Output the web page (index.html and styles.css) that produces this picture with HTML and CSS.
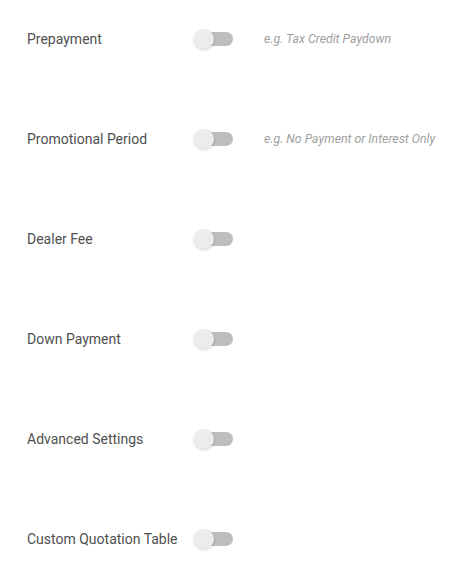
FILE: index.html
```html
<!DOCTYPE html>
<html>
<head>
<meta charset="utf-8">
<link rel="stylesheet" href="styles.css">
</head>
<body>
<div class="list">
  <div class="row"><span class="label">Prepayment</span><span class="switch"><span class="track"></span><span class="thumb"></span></span><span class="hint">e.g. Tax Credit Paydown</span></div>
  <div class="row"><span class="label">Promotional Period</span><span class="switch"><span class="track"></span><span class="thumb"></span></span><span class="hint">e.g. No Payment or Interest Only</span></div>
  <div class="row"><span class="label">Dealer Fee</span><span class="switch"><span class="track"></span><span class="thumb"></span></span></div>
  <div class="row"><span class="label">Down Payment</span><span class="switch"><span class="track"></span><span class="thumb"></span></span></div>
  <div class="row"><span class="label">Advanced Settings</span><span class="switch"><span class="track"></span><span class="thumb"></span></span></div>
  <div class="row"><span class="label">Custom Quotation Table</span><span class="switch"><span class="track"></span><span class="thumb"></span></span></div>
</div>
</body>
</html>
```
FILE: styles.css
```css
html, body {
  margin: 0;
  padding: 0;
  background: #fff;
  font-family: Roboto, "Noto Sans", sans-serif;
}
.list {
  display: flex;
  flex-direction: column;
  gap: 60px;
  padding: 19px 0 0 27px;
}
.row {
  display: flex;
  align-items: center;
  height: 40px;
}
.label {
  width: 167px;
  font-size: 14px;
  color: #4f4f4f;
}
.switch {
  position: relative;
  width: 39px;
  height: 20px;
  flex: none;
}
.track {
  position: absolute;
  left: 3px;
  top: 3px;
  width: 36px;
  height: 14px;
  border-radius: 7px;
  background: #bdbdbd;
}
.thumb {
  position: absolute;
  left: 0;
  top: 0;
  width: 20px;
  height: 20px;
  border-radius: 50%;
  background: #ececec;
  box-shadow: 0 1px 3px rgba(0,0,0,0.18);
}
.hint {
  margin-left: 31px;
  font-size: 12.3px;
  font-style: italic;
  color: #a0a0a0;
}
```
